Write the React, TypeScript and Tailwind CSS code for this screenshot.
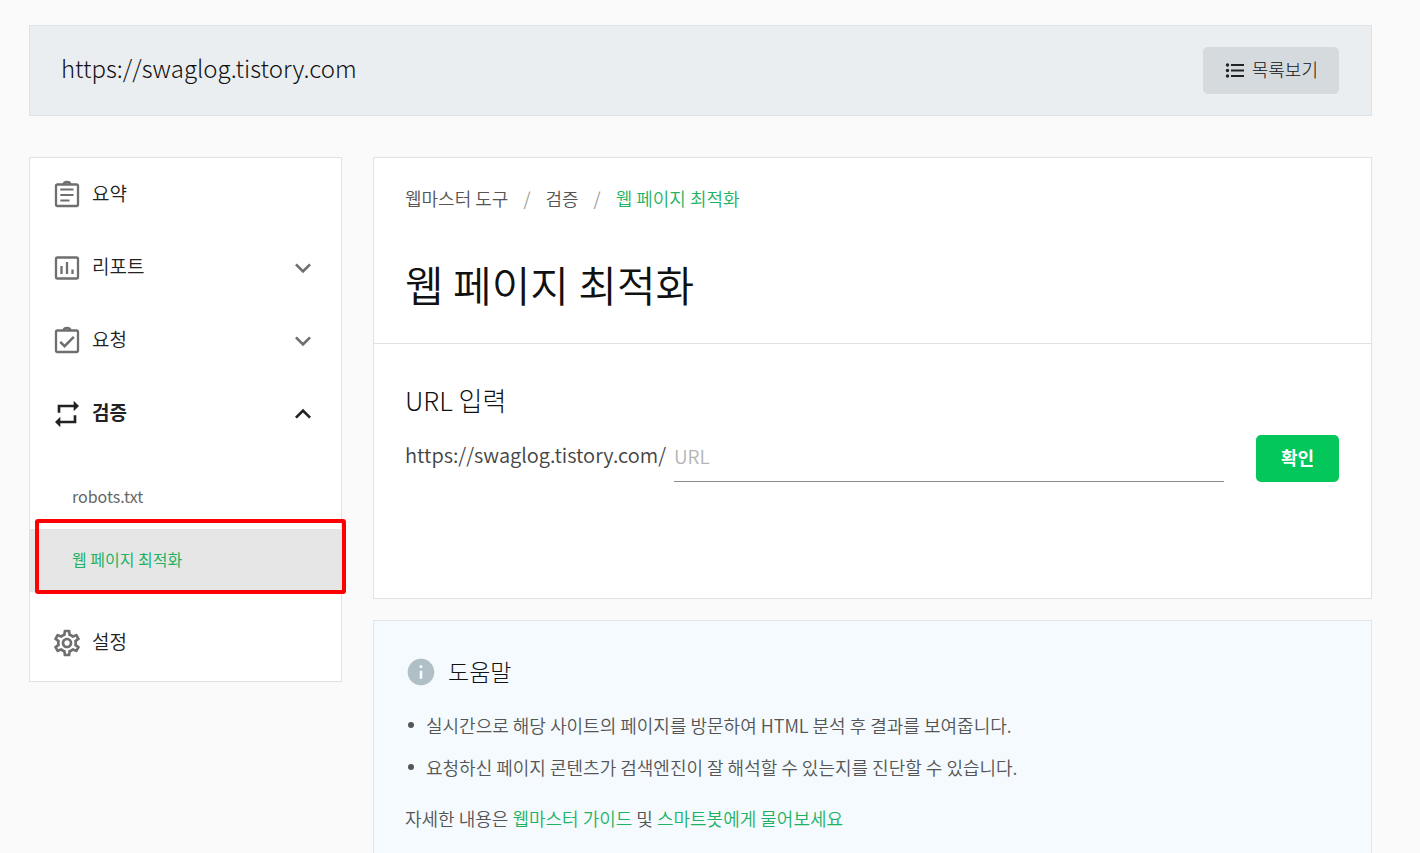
import React from 'react';
import { MdExpandLess, MdExpandMore, MdInfo, MdOutlineSettings, MdRepeat } from 'react-icons/md';

const SITE_URL = 'https://swaglog.tistory.com';

type IconComponent = React.ComponentType<{ className?: string }>;

interface NavItemProps {
  icon: IconComponent;
  label: string;
  expandable?: boolean;
  open?: boolean;
}

const SummaryIcon: IconComponent = ({ className }) => (
  <svg className={className} viewBox="0 0 32 32" fill="none" stroke="currentColor" strokeWidth="2.3" aria-hidden="true">
    <rect x="5" y="5.5" width="22" height="21.5" rx="1.5" />
    <path d="M12.4 5.5C12.8 3.9 14.2 3 16 3s3.2.9 3.6 2.5" />
    <path d="M9.3 10.5h13.2M9.3 16h13.2M9.3 21.5h9.2" strokeWidth="2" />
  </svg>
);

const ReportIcon: IconComponent = ({ className }) => (
  <svg className={className} viewBox="0 0 32 32" fill="none" stroke="currentColor" strokeWidth="2.3" aria-hidden="true">
    <rect x="5" y="5.5" width="22" height="21" rx="1.5" />
    <path d="M10.5 14v8M16 10v12M21.5 17.5V22" />
  </svg>
);

const RequestIcon: IconComponent = ({ className }) => (
  <svg className={className} viewBox="0 0 32 32" fill="none" stroke="currentColor" strokeWidth="2.3" aria-hidden="true">
    <rect x="5" y="5.5" width="22" height="21.5" rx="1.5" />
    <path d="M12.4 5.5C12.8 3.9 14.2 3 16 3s3.2.9 3.6 2.5" />
    <path d="M9.2 16.8l4.4 4.4 9.2-9.4" strokeWidth="2.5" />
  </svg>
);

const NavItem: React.FC<NavItemProps> = ({ icon: Icon, label, expandable = false, open = false }) => {
  const Chevron = open ? MdExpandLess : MdExpandMore;

  return (
    <button
      type="button"
      aria-expanded={expandable ? open : undefined}
      className={`flex h-[73px] w-full items-center pl-[21px] pr-[22px] text-left text-[19px] ${
        open ? 'font-bold text-[#222]' : 'font-[350] text-[#222]'
      }`}
    >
      <Icon className={`mr-[9px] size-8 shrink-0 ${open ? 'text-[#222]' : 'text-[#6f6f6f]'}`} />
      <span className="flex-1 pb-[2px]">{label}</span>
      {expandable && <Chevron className={`size-8 shrink-0 ${open ? 'text-[#222]' : 'text-[#6f6f6f]'}`} />}
    </button>
  );
};

const ListIcon = () => (
  <svg className="h-4 w-5" viewBox="0 0 20 16" fill="#222" aria-hidden="true">
    <circle cx="2.5" cy="2" r="1.7" />
    <circle cx="2.5" cy="7.5" r="1.7" />
    <circle cx="2.5" cy="13" r="1.7" />
    <path d="M6 1h13v2H6zM6 6.5h13v2H6zM6 12h13v2H6z" />
  </svg>
);

// Site bar with the current address
const SiteHeader = () => (
  <header className="flex items-center justify-between border border-[#dfe3e6] bg-[#ebeef1] py-[21px] pr-8 pl-[31px]">
    <p className="pb-[6px] text-[24px] leading-9 font-light text-[#111]">{SITE_URL}</p>
    <button
      type="button"
      className="flex h-[47px] items-center gap-[7px] rounded-[5px] bg-[#d5dade] pr-[21px] pl-[22px] text-[18px] font-light text-[#111]"
    >
      <ListIcon />
      <span className="pb-[2px]">목록보기</span>
    </button>
  </header>
);

const Sidebar = () => (
  <nav className="w-[313px] shrink-0 border border-[#e2e2e2] bg-white pb-[2px]">
    <NavItem icon={SummaryIcon} label="요약" />
    <NavItem icon={ReportIcon} label="리포트" expandable />
    <NavItem icon={RequestIcon} label="요청" expandable />
    <NavItem icon={MdRepeat} label="검증" expandable open />
    <ul className="pt-4 pb-[14px] text-[16px]">
      <li>
        <a href="#robots" className="flex h-[63px] items-center px-[42px] pb-1 text-[#666]">
          robots.txt
        </a>
      </li>
      <li className="relative">
        <a href="#optimize" className="flex h-[63px] items-center bg-[#e6e6e6] px-[42px] pb-1 text-[#1fb264]">
          웹 페이지 최적화
        </a>
        {/* highlight frame around the active entry */}
        <span className="pointer-events-none absolute -top-[10px] -right-[5px] -bottom-[2px] left-[5px] rounded-[3px] border-4 border-[#ff0000]" />
      </li>
    </ul>
    <NavItem icon={MdOutlineSettings} label="설정" />
  </nav>
);

const Breadcrumb = () => (
  <nav aria-label="breadcrumb">
    <ol className="flex items-center gap-[15px] text-[18px] leading-6 font-[350] text-[#555]">
      <li>
        <a href="#tools">웹마스터 도구</a>
      </li>
      <li aria-hidden="true" className="text-[#999]">/</li>
      <li>
        <a href="#verify">검증</a>
      </li>
      <li aria-hidden="true" className="text-[#999]">/</li>
      <li className="text-[#1fb264]" aria-current="page">웹 페이지 최적화</li>
    </ol>
  </nav>
);

const OptimizeCard = () => (
  <section className="border border-[#e2e2e2] bg-white">
    <div className="border-b border-[#e2e2e2] pt-7 pr-8 pb-[27px] pl-[31px]">
      <Breadcrumb />
      <h1 className="mt-[42px] text-[42px] leading-[64px] font-[350] text-[#111]">웹 페이지 최적화</h1>
    </div>
    <form className="pt-9 pr-8 pb-[116px] pl-[31px]">
      <h2 className="text-[26px] leading-10 font-light text-[#111]">URL 입력</h2>
      <div className="mt-[14px] flex items-center">
        <label htmlFor="page-url" className="mr-2 pb-[6px] text-[20px] font-[350] text-[#444]">
          {SITE_URL}/
        </label>
        <input
          id="page-url"
          type="text"
          placeholder="URL"
          className="h-12 min-w-0 flex-1 border-b border-[#8a8a8a] bg-transparent pb-1 text-[19px] font-[350] outline-none placeholder:text-[#b4b4b4]"
        />
        <button
          type="submit"
          className="ml-8 h-[47px] w-[83px] rounded-[5px] bg-[#03c75a] pb-[2px] text-[18px] font-bold text-white"
        >
          확인
        </button>
      </div>
    </form>
  </section>
);

const HELP_ITEMS = [
  '실시간으로 해당 사이트의 페이지를 방문하여 HTML 분석 후 결과를 보여줍니다.',
  '요청하신 페이지 콘텐츠가 검색엔진이 잘 해석할 수 있는지를 진단할 수 있습니다.',
];

const HelpCard = () => (
  <section className="border border-[#e2e6e8] bg-[#f4fafd] pt-[30px] pr-8 pb-12 pl-[31px] text-[18px] font-[350] text-[#555]">
    <h2 className="flex items-center gap-[11px] text-[23px] leading-10 font-light text-[#111]">
      <MdInfo className="size-8 text-[#b0bec5]" />
      <span className="pb-[2px]">도움말</span>
    </h2>
    <ul className="mt-[11px]">
      {HELP_ITEMS.map((item) => (
        <li key={item} className="flex items-center gap-3 pl-[3px] leading-[42px]">
          <span className="size-[6px] rounded-full bg-[#555]" />
          {item}
        </li>
      ))}
    </ul>
    <p className="mt-[9px] leading-[42px]">
      자세한 내용은{' '}
      <a href="#guide" className="text-[#1fb264]">웹마스터 가이드</a> 및{' '}
      <a href="#bot" className="text-[#1fb264]">스마트봇에게 물어보세요</a>
    </p>
  </section>
);

export default function App() {
  return (
    <div className="h-screen overflow-hidden bg-[#fafafa] pt-[25px] pr-12 pl-[29px] font-['Noto_Sans_CJK_KR',sans-serif]">
      <SiteHeader />
      <div className="mt-[41px] flex items-start gap-[31px]">
        <Sidebar />
        <main className="flex min-w-0 flex-1 flex-col gap-[21px]">
          <OptimizeCard />
          <HelpCard />
        </main>
      </div>
    </div>
  );
}
